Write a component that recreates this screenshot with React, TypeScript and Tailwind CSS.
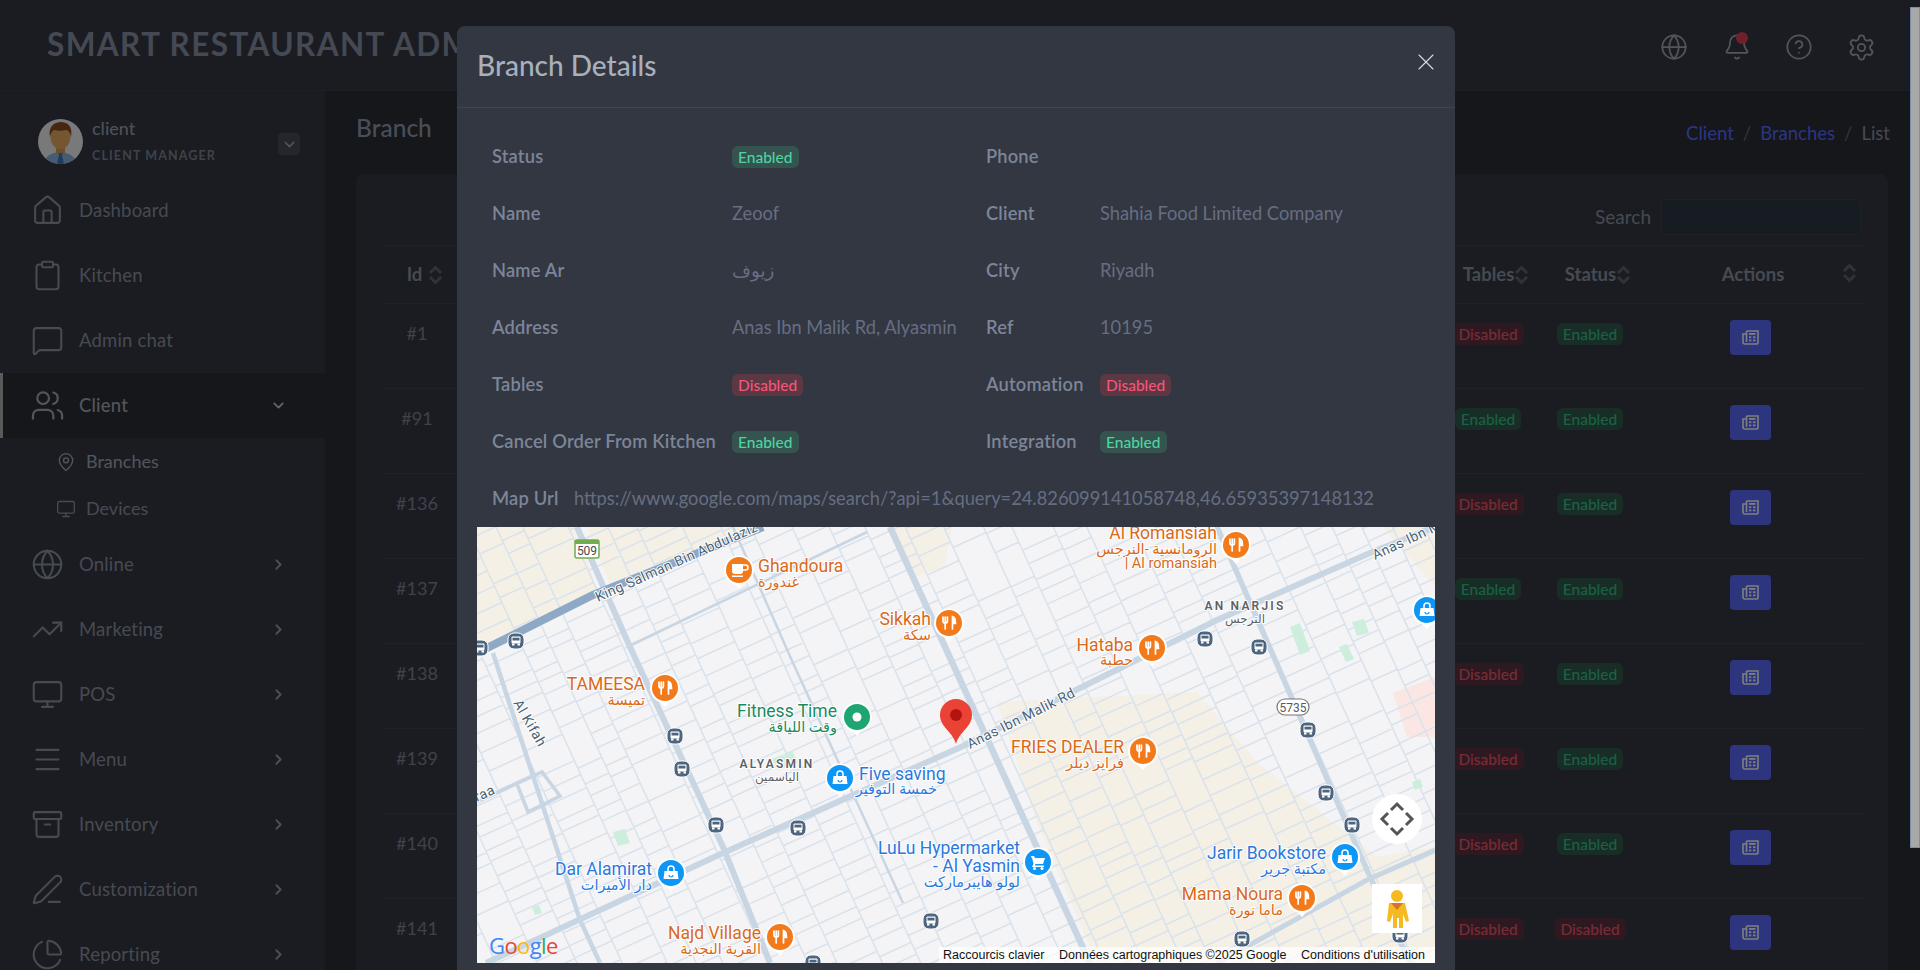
import {
  Archive,
  ChartPie,
  ChevronDown,
  ChevronRight,
  CircleHelp,
  Clipboard,
  Globe,
  House,
  MapPin,
  Menu,
  MessageSquare,
  Monitor,
  PenLine,
  Settings,
  Bell,
  TrendingUp,
  Users,
  X,
} from "lucide-react";
import type { ReactNode } from "react";

const mainMenu = [
  { label: "Dashboard", icon: House },
  { label: "Kitchen", icon: Clipboard },
  { label: "Admin chat", icon: MessageSquare },
];

const lowerMenu = [
  { label: "Online", icon: Globe },
  { label: "Marketing", icon: TrendingUp },
  { label: "POS", icon: Monitor },
  { label: "Menu", icon: Menu },
  { label: "Inventory", icon: Archive },
  { label: "Customization", icon: PenLine },
  { label: "Reporting", icon: ChartPie },
];

const rows = [
  { id: 1, tables: false, status: true },
  { id: 91, tables: true, status: true },
  { id: 136, tables: false, status: true },
  { id: 137, tables: true, status: true },
  { id: 138, tables: false, status: true },
  { id: 139, tables: false, status: true },
  { id: 140, tables: false, status: true },
  { id: 141, tables: false, status: false },
];

function SortIcon() {
  return (
    <svg width="15" height="18" viewBox="0 0 15 18" fill="none" stroke="#5d6472" strokeWidth="3">
      <path d="M2 7l5.500-5.500L13 7" />
      <path d="M2 11l5.500 5.500L13 11" />
    </svg>
  );
}

function PageBadge({ on }: { on: boolean }) {
  return (
    <span
      className={
        on
          ? "inline-block h-[22px] rounded-md bg-[#2f5a4c] px-[6px] text-[15.500px] leading-[22px] font-medium text-[#36c08a]"
          : "inline-block h-[22px] rounded-md bg-[#5c3340] px-[6px] text-[15.500px] leading-[22px] font-medium text-[#f0566f]"
      }
    >
      {on ? "Enabled" : "Disabled"}
    </span>
  );
}

function ModalBadge({ on }: { on: boolean }) {
  return (
    <span
      className={
        on
          ? "inline-block h-[22px] rounded-md bg-[#35544f] px-[6px] text-[15.500px] leading-[22px] font-medium text-[#4dd3a2]"
          : "inline-block h-[22px] rounded-md bg-[#5c3845] px-[6px] text-[15.500px] leading-[22px] font-medium text-[#f2567a]"
      }
    >
      {on ? "Enabled" : "Disabled"}
    </span>
  );
}

function Avatar() {
  return (
    <svg width="45" height="45" viewBox="0 0 45 45" className="rounded-full">
      <rect width="45" height="45" fill="#f2f2f2" />
      <path d="M6 45c1-8 6-11 16-12 10 1 15 4 17 12z" fill="#8fb8e0" />
      <path d="M20 33h5l-1 3 2 9h-7l2-9z" fill="#3f78c0" />
      <rect x="18" y="26" width="9" height="8" fill="#d9a05c" />
      <ellipse cx="22.500" cy="18" rx="10" ry="12" fill="#e9ad62" />
      <path d="M12 18c-2-10 4-15 11-15s12 5 10 15c-1-5-3-7-5-7-4 1-9 1-12 0-2 1-3 3-4 7z" fill="#8a4f28" />
    </svg>
  );
}

function NewsIcon() {
  return (
    <svg width="17" height="15" viewBox="0 0 17 15" fill="none" stroke="#fff" strokeWidth="1.600">
      <path d="M4.500 1h11.500v11.500a1.500 1.500 0 0 1-1.500 1.500H3a2 2 0 0 1-2-2V4h3.500" />
      <path d="M4.500 1v11" />
      <g fill="#fff" stroke="none">
        <rect x="7" y="3" width="6.500" height="1.800" />
        <rect x="7" y="6.300" width="2.300" height="1.800" />
        <rect x="11" y="6.300" width="2.500" height="1.800" />
        <rect x="7" y="9.500" width="2.300" height="1.800" />
        <rect x="11" y="9.500" width="2.500" height="1.800" />
      </g>
    </svg>
  );
}

function MenuRow({ icon, label, chevron }: { icon: ReactNode; label: string; chevron?: boolean }) {
  return (
    <div className="flex h-[65px] items-center pl-[32px] pr-[38px]">
      <span className="flex w-[30px] justify-center">{icon}</span>
      <span className="ml-[17px] flex-1 text-[18.500px] tracking-[0.01em] text-[#8d94a3]">{label}</span>
      {chevron && <ChevronRight size={17} strokeWidth={2.500} className="text-[#9aa0ac]" />}
    </div>
  );
}

function Sidebar() {
  return (
    <aside className="w-[325px] shrink-0 bg-[#343844]">
      <div className="flex h-[87px] items-start pl-[38px] pt-[28px]">
        <Avatar />
        <div className="ml-[9px] flex-1">
          <p className="-mt-[2px] text-[18px] leading-[22px] font-medium text-[#9aa1af]">client</p>
          <p className="mt-[8px] text-[12.500px] leading-[18px] font-bold tracking-[0.09em] text-[#7d8494]">CLIENT MANAGER</p>
        </div>
        <span className="mr-[25px] mt-[14px] flex h-[22px] w-[22px] items-center justify-center rounded bg-[#484c58]">
          <ChevronDown size={17} className="text-[#a5abb8]" />
        </span>
      </div>
      {mainMenu.map((m) => (
        <MenuRow key={m.label} label={m.label} icon={<m.icon size={33} strokeWidth={1.500} className="shrink-0 text-[#8d94a3]" />} />
      ))}
      <div className="flex h-[65px] items-center border-l-[3px] border-[#b5b5b5] bg-[#2a2e36] pl-[29px] pr-[38px]">
        <span className="flex w-[30px] justify-center">
          <Users size={35} strokeWidth={1.500} className="shrink-0 text-[#a5abb8]" />
        </span>
        <span className="ml-[17px] flex-1 text-[18.500px] tracking-[0.01em] font-medium text-[#a5abb8]">Client</span>
        <ChevronDown size={17} strokeWidth={2.500} className="text-[#c5c9d2]" />
      </div>
      <div className="flex h-[47px] items-center pl-[56px] text-[18px] text-[#a5abb8]">
        <MapPin size={20} strokeWidth={1.600} />
        <span className="ml-[10px]">Branches</span>
      </div>
      <div className="flex h-[47px] items-center pl-[56px] text-[18px] text-[#8d94a3]">
        <Monitor size={20} strokeWidth={1.600} />
        <span className="ml-[10px]">Devices</span>
      </div>
      {lowerMenu.map((m) => (
        <MenuRow key={m.label} chevron label={m.label} icon={<m.icon size={33} strokeWidth={1.500} className="shrink-0 text-[#8d94a3]" />} />
      ))}
    </aside>
  );
}

function BranchTable() {
  return (
    <div className="mr-[2px] rounded-lg bg-[#343844] pl-[26px] pr-[24px]">
      <div className="flex h-[71px] items-center justify-end pr-[3px] pt-[15px]">
        <span className="text-[19px] text-[#8d94a3]">Search</span>
        <span className="ml-[10px] h-[36px] w-[200px] rounded border border-[#3a4250] bg-[#2f3645]" />
      </div>
      <div className="grid h-[59px] grid-cols-[70px_986px_100px_104px_222px] items-center border-y border-[#3f434f] text-[18.500px] font-bold text-[#8d94a3]">
        <span className="flex items-center justify-center gap-[6px] pl-[16px]">
          Id <SortIcon />
        </span>
        <span />
        <span className="flex items-center justify-center pl-[16px]">
          Tables <SortIcon />
        </span>
        <span className="flex items-center justify-center pl-[16px]">
          Status <SortIcon />
        </span>
        <span className="relative text-center">
          Actions
          <span className="absolute right-[7px] top-[3px]">
            <SortIcon />
          </span>
        </span>
      </div>
      {rows.map((r) => (
        <div key={r.id} className="grid h-[85px] grid-cols-[70px_986px_100px_104px_222px] border-b border-[#3f434f] text-[18px] text-[#7d8494]">
          <span className="pt-[16px] text-center">#{r.id}</span>
          <span />
          <span className="pt-[16px] text-center">
            <PageBadge on={r.tables} />
          </span>
          <span className="pt-[16px] text-center">
            <PageBadge on={r.status} />
          </span>
          <span className="pt-[16px] pr-[5px] text-center">
            <button className="inline-flex h-[35px] w-[41px] items-center justify-center rounded bg-[#5a6aff]">
              <NewsIcon />
            </button>
          </span>
        </div>
      ))}
    </div>
  );
}

// minor street network, rotated with the main roads
function streetPath() {
  let seed = 7;
  const rand = () => {
    seed = (seed * 16807) % 2147483647;
    return seed / 2147483647;
  };
  const ca = Math.cos(0.43);
  const sa = Math.sin(0.43);
  const pt = (u: number, v: number) => `${(480 + u * ca + v * sa).toFixed(1)} ${(218 - u * sa + v * ca).toFixed(1)}`;
  let d = "";
  for (let u = -720; u < 720; ) {
    const w = 24 + rand() * 20;
    d += `M${pt(u, -560)}L${pt(u, 560)}`;
    for (let v = -560; v < 560; ) {
      const step = 11 + rand() * 11;
      if (rand() > 0.1) d += `M${pt(u, v)}L${pt(u + w, v)}`;
      v += step;
    }
    u += w;
  }
  return d;
}

const streets = streetPath();

type Tone = "orange" | "blue" | "green";

const toneFill: Record<Tone, string> = { orange: "#f27a1a", blue: "#0d96f6", green: "#1ea672" };
const toneText: Record<Tone, string> = { orange: "#d9691a", blue: "#2b78dd", green: "#1b8a5f" };

const pins: { x: number; y: number; tone: Tone; kind: "fork" | "cup" | "bag" | "cart" | "dot" }[] = [
  { x: 262, y: 43, tone: "orange", kind: "cup" },
  { x: 472, y: 96, tone: "orange", kind: "fork" },
  { x: 188, y: 161, tone: "orange", kind: "fork" },
  { x: 380, y: 190, tone: "green", kind: "dot" },
  { x: 363, y: 251, tone: "blue", kind: "bag" },
  { x: 194, y: 346, tone: "blue", kind: "bag" },
  { x: 303, y: 410, tone: "orange", kind: "fork" },
  { x: 561, y: 335, tone: "blue", kind: "cart" },
  { x: 759, y: 18, tone: "orange", kind: "fork" },
  { x: 675, y: 121, tone: "orange", kind: "fork" },
  { x: 666, y: 224, tone: "orange", kind: "fork" },
  { x: 868, y: 330, tone: "blue", kind: "bag" },
  { x: 825, y: 371, tone: "orange", kind: "fork" },
  { x: 950, y: 83, tone: "blue", kind: "bag" },
];

const labels: { x: number; y: number; t: string; tone: Tone; anchor?: "end"; small?: boolean }[] = [
  { x: 281, y: 45, t: "Ghandoura", tone: "orange" },
  { x: 281, y: 60, t: "غندورة", tone: "orange", small: true },
  { x: 454, y: 98, t: "Sikkah", tone: "orange", anchor: "end" },
  { x: 454, y: 113, t: "سكة", tone: "orange", anchor: "end", small: true },
  { x: 168, y: 163, t: "TAMEESA", tone: "orange", anchor: "end" },
  { x: 168, y: 178, t: "تميسة", tone: "orange", anchor: "end", small: true },
  { x: 360, y: 190, t: "Fitness Time", tone: "green", anchor: "end" },
  { x: 360, y: 205, t: "وقت اللياقة", tone: "green", anchor: "end", small: true },
  { x: 382, y: 253, t: "Five saving", tone: "blue" },
  { x: 460, y: 267, t: "خمسة التوفير", tone: "blue", anchor: "end", small: true },
  { x: 175, y: 348, t: "Dar Alamirat", tone: "blue", anchor: "end" },
  { x: 175, y: 363, t: "دار الأميرات", tone: "blue", anchor: "end", small: true },
  { x: 284, y: 412, t: "Najd Village", tone: "orange", anchor: "end" },
  { x: 284, y: 427, t: "القرية النجدية", tone: "orange", anchor: "end", small: true },
  { x: 543, y: 327, t: "LuLu Hypermarket", tone: "blue", anchor: "end" },
  { x: 543, y: 345, t: "- Al Yasmin", tone: "blue", anchor: "end" },
  { x: 543, y: 360, t: "لولو هايبرماركت", tone: "blue", anchor: "end", small: true },
  { x: 740, y: 12, t: "Al Romansiah", tone: "orange", anchor: "end" },
  { x: 740, y: 27, t: "الرومانسية -النرجس", tone: "orange", anchor: "end", small: true },
  { x: 740, y: 41, t: "| Al romansiah", tone: "orange", anchor: "end", small: true },
  { x: 656, y: 124, t: "Hataba", tone: "orange", anchor: "end" },
  { x: 656, y: 138, t: "حطبة", tone: "orange", anchor: "end", small: true },
  { x: 647, y: 226, t: "FRIES DEALER", tone: "orange", anchor: "end" },
  { x: 647, y: 241, t: "فرايز ديلر", tone: "orange", anchor: "end", small: true },
  { x: 849, y: 332, t: "Jarir Bookstore", tone: "blue", anchor: "end" },
  { x: 849, y: 347, t: "مكتبة جرير", tone: "blue", anchor: "end", small: true },
  { x: 806, y: 373, t: "Mama Noura", tone: "orange", anchor: "end" },
  { x: 806, y: 388, t: "ماما نورة", tone: "orange", anchor: "end", small: true },
];

const buses = [
  [3, 121], [39, 114], [198, 209], [205, 242], [239, 298], [321, 301], [454, 394], [336, 436],
  [728, 112], [782, 120], [831, 203], [849, 266], [875, 298], [765, 412], [923, 408],
];

function PinGlyph({ kind }: { kind: string }) {
  if (kind === "fork")
    return (
      <g fill="none" stroke="#fff" strokeWidth="1.700" strokeLinecap="round">
        <path d="M-6-6v4a2.200 2.200 0 0 0 4.400 0v-4M-3.800-6v12" />
        <path d="M3.500 6V-6.500c2.500.5 3 3.500 3 7h-3" fill="#fff" />
      </g>
    );
  if (kind === "cup")
    return (
      <g fill="#fff">
        <path d="M-7-6H4v7a3 3 0 0 1-3 3h-5a3 3 0 0 1-3-3z" />
        <path d="M4-5h2.500a2.500 2.500 0 0 1 0 5H4" fill="none" stroke="#fff" strokeWidth="1.500" />
        <rect x="-7" y="5.500" width="11" height="1.500" />
      </g>
    );
  if (kind === "bag")
    return (
      <g>
        <path d="M-6.500-2h13l1 8h-15z" fill="#fff" />
        <path d="M-3-2v-2a3 3 0 0 1 6 0v2" fill="none" stroke="#fff" strokeWidth="1.500" />
        <path d="M-2 2a2 2 0 0 0 4 0" fill="none" stroke="#0d96f6" strokeWidth="1.200" />
      </g>
    );
  if (kind === "cart")
    return (
      <g fill="#fff">
        <path d="M-7-6h3l1 2H7L5 2h-7.500l-.8 1.500H6V5H-6l1.500-3L-6-4.500h-1z" />
        <circle cx="-3.500" cy="6.500" r="1.500" />
        <circle cx="4" cy="6.500" r="1.500" />
      </g>
    );
  return <circle r="4.500" fill="#fff" />;
}

function MapView() {
  return (
    <svg width="958" height="436" viewBox="0 0 958 436" className="block font-['Roboto','DejaVu_Sans',sans-serif]">
      <rect width="958" height="436" fill="#f4f3f5" />
      <g fill="#f4f0e6">
        <path d="M0 0h100l22 70L0 126z" />
        <path d="M110 0h170L135 62z" />
        <path d="M520 175l200-10 60 70 120 95 58-10v116H620l-60-140z" />
        <path d="M906 0h52v60z" />
        <path d="M415 0h60l-8 40-30 10z" />
      </g>
      <path d="M916 166l42-16v60h-28z" fill="#fbe6e4" />
      <path d={streets} fill="none" stroke="#dae2eb" strokeWidth="1.500" />
      <g fill="#cdeedd">
        <path d="M875 95l12-3 5 14-12 3z" />
        <path d="M813 100l10-4 10 28-10 4z" />
        <path d="M862 120l8-3 7 15-8 3z" />
        <path d="M136 305l12-3 5 14-12 3z" />
        <path d="M295 232l20-8 6 12-20 7z" />
        <path d="M55 380l7-2 3 8-7 2z" />
        <path d="M935 255l8-3 3 8-8 3z" />
      </g>
      <g fill="none" stroke="#c8d5e3" strokeLinecap="butt">
        <path d="M100 0l53 120 93 200 47 116" strokeWidth="6" />
        <path d="M413 0l200 436" strokeWidth="6.500" />
        <path d="M9 436l237-110 247-110 100-50 147-73 153-67 65-26" strokeWidth="6" />
        <path d="M740 0l150 343 43 93" strokeWidth="5.500" />
        <path d="M16 126l87 267 20 43" strokeWidth="4.500" />
        <path d="M740 436l150-83 68-30" strokeWidth="5" />
        <path d="M0 275l65-30 18 24-32 16-11-28" strokeWidth="3.500" />
        <path d="M256 0l60 136 110 240" strokeWidth="2.500" />
        <path d="M150 120l240-115" strokeWidth="2.500" />
      </g>
      <path d="M0 126L116 68 286 0" fill="none" stroke="#8ea9c6" strokeWidth="8" />

      <g fill="#4b5f75" fontSize="14" letterSpacing=".4" stroke="#fff" strokeWidth="2" paintOrder="stroke">
        <text transform="translate(121 75) rotate(-24)">King Salman Bin Abdulaziz</text>
        <text transform="translate(493 222) rotate(-26.500)">Anas Ibn Malik Rd</text>
        <text transform="translate(898 33) rotate(-25)">Anas Ibn Malik</text>
        <text transform="translate(36 176) rotate(60)">Al Kifah</text>
        <text transform="translate(0 275) rotate(-25)">raa</text>
      </g>

      {buses.map(([x, y]) => (
        <g key={`${x}-${y}`} transform={`translate(${x} ${y})`}>
          <rect x="-8" y="-8" width="16" height="16" rx="6" fill="#4e6580" stroke="#fff" strokeWidth="1" />
          <rect x="-4.500" y="-4.500" width="9" height="7" rx="1" fill="#fff" />
          <rect x="-3.500" y="-3.300" width="7" height="2.800" fill="#4e6580" />
          <rect x="-4" y="2.500" width="2.500" height="2" fill="#fff" />
          <rect x="1.500" y="2.500" width="2.500" height="2" fill="#fff" />
        </g>
      ))}

      <g fontSize="12" textAnchor="middle">
        <rect x="98" y="13" width="24" height="18" rx="2" fill="#fff" stroke="#71ad4f" strokeWidth="1.500" />
        <rect x="98" y="13" width="24" height="4" fill="#71ad4f" />
        <text x="110" y="28" fill="#4a4a4a">509</text>
        <rect x="800" y="172" width="32" height="16" rx="8" fill="#fff" stroke="#777" strokeWidth="1.200" />
        <text x="816" y="185" fill="#5a5a5a">5735</text>
      </g>

      <g fontWeight="600" fill="#5c5f66" textAnchor="middle" stroke="#fff" strokeWidth="2" paintOrder="stroke">
        <text x="300" y="241" fontSize="12" letterSpacing="2.200">ALYASMIN</text>
        <text x="300" y="254" fontSize="12" fontWeight="400">الياسمين</text>
        <text x="768" y="83" fontSize="12" letterSpacing="2.200">AN NARJIS</text>
        <text x="768" y="96" fontSize="12" fontWeight="400">النرجس</text>
      </g>

      {labels.map((l) => (
        <text
          key={l.t}
          x={l.x}
          y={l.y}
          textAnchor={l.anchor ?? "start"}
          fontSize={l.small ? 14.500 : 17.500}
          fill={toneText[l.tone]}
          stroke="#fff"
          strokeWidth="2"
          paintOrder="stroke"
        >
          {l.t}
        </text>
      ))}

      {pins.map((p) => (
        <g key={`${p.x}-${p.y}`} transform={`translate(${p.x} ${p.y})`}>
          <path d="M-14.500 4a15 15 0 1 1 29 0q-2 8-11 11l-3.500 4-3.500-4q-9-3-11-11z" fill="#fff" />
          <circle r="13" fill={toneFill[p.tone]} />
          <PinGlyph kind={p.kind} />
        </g>
      ))}

      <path d="M479 217c-3-12-16-17-16-29a16 16 0 0 1 32 0c0 12-13 17-16 29z" fill="#ea4335" />
      <circle cx="479" cy="188" r="6" fill="#b3140f" />

      <g fontSize="22" fontWeight="500">
        <text x="12" y="427" fontFamily="'Open Sans',sans-serif" letterSpacing="-.6">
          <tspan fill="#4285f4">G</tspan>
          <tspan fill="#ea4335">o</tspan>
          <tspan fill="#fbbc05">o</tspan>
          <tspan fill="#4285f4">g</tspan>
          <tspan fill="#34a853">l</tspan>
          <tspan fill="#ea4335">e</tspan>
        </text>
      </g>

      <rect x="462" y="420" width="496" height="16" fill="#fff" fillOpacity=".7" />
      <g fontSize="12.500" fontFamily="'Liberation Sans',sans-serif" fill="#111">
        <text x="466" y="432">Raccourcis clavier</text>
        <text x="582" y="432">Données cartographiques ©2025 Google</text>
        <text x="824" y="432">Conditions d'utilisation</text>
      </g>

      <circle cx="920" cy="292" r="25" fill="#fff" />
      <g fill="none" stroke="#555" strokeWidth="3">
        <path d="M914 283l6-6 6 6" />
        <path d="M914 301l6 6 6-6" />
        <path d="M911 286l-6 6 6 6" />
        <path d="M929 286l6 6-6 6" />
      </g>

      <rect x="895" y="357" width="50" height="49" fill="#fff" />
      <g fill="#f5b921">
        <circle cx="920" cy="369" r="6" />
        <path d="M912 376h16l4 18-3 1-3-8v14h-4v-10h-2v10h-4v-14l-3 8-3-1z" />
      </g>
      <path d="M914 376h12l-6 7z" fill="#d9722b" />
    </svg>
  );
}

function DetailRow({ a, av, b, bv }: { a: string; av?: ReactNode; b: string; bv?: ReactNode }) {
  return (
    <div className="flex h-[57px] items-center">
      <span className="w-[240px] shrink-0 font-semibold tracking-[0.01em] text-[#7d8598]">{a}</span>
      <span className="w-[224px] shrink-0 overflow-hidden whitespace-nowrap text-[#666e82]">{av}</span>
      <span className="ml-[30px] w-[114px] shrink-0 font-semibold tracking-[0.01em] text-[#7d8598]">{b}</span>
      <span className="text-[#666e82]">{bv}</span>
    </div>
  );
}

function BranchModal() {
  return (
    <div className="absolute left-[457px] top-[26px] w-[998px] rounded-lg bg-[#323742] text-[18.300px]">
      <div className="flex h-[82px] items-center justify-between border-b border-[#3f4552] pl-[20px] pr-[15px]">
        <h2 className="mb-[3px] text-[28px] font-medium text-[#a9afbb]">Branch Details</h2>
        <X size={28} strokeWidth={1} className="mb-[10px] text-[#d5d8de]" />
      </div>
      <div className="px-[35px] pt-[20px]">
        <DetailRow a="Status" av={<ModalBadge on />} b="Phone" />
        <DetailRow a="Name" av="Zeoof" b="Client" bv="Shahia Food Limited Company" />
        <DetailRow a="Name Ar" av="زيوف" b="City" bv="Riyadh" />
        <DetailRow a="Address" av="Anas Ibn Malik Rd, Alyasmin" b="Ref" bv="10195" />
        <DetailRow a="Tables" av={<ModalBadge on={false} />} b="Automation" bv={<ModalBadge on={false} />} />
        <DetailRow a="Cancel Order From Kitchen" av={<ModalBadge on />} b="Integration" bv={<ModalBadge on />} />
        <div className="flex h-[57px] items-center">
          <span className="w-[82px] shrink-0 font-semibold tracking-[0.01em] text-[#7d8598]">Map Url</span>
          <span className="text-[#666e82]">https://www.google.com/maps/search/?api=1&amp;query=24.826099141058748,46.65935397148132</span>
        </div>
      </div>
      <div className="px-[20px] pb-[20px]">
        <MapView />
      </div>
    </div>
  );
}

export default function App() {
  return (
    <div className="relative h-[970px] w-[1920px] overflow-hidden bg-[#2a2e36] font-['Lato','DejaVu_Sans',sans-serif]">
      <header className="flex h-[91px] items-center justify-between border-b border-[#3a3e49] bg-[#343844] pl-[47px] pr-[44px]">
        <h1 className="whitespace-nowrap text-[31.500px] font-bold tracking-[1.400px] text-[#8a93a6]">SMART RESTAURANT ADMIN</h1>
        <div className="mt-[4px] flex items-center gap-[34px] text-[#a5abb8]">
          <Globe size={28} strokeWidth={1.500} className="mr-[1px]" />
          <span className="relative">
            <Bell size={28} strokeWidth={1.500} />
            <span className="absolute right-[3px] -top-[1px] h-[12px] w-[12px] rounded-full bg-[#e0405a]" />
          </span>
          <CircleHelp size={28} strokeWidth={1.500} />
          <Settings size={29} strokeWidth={1.500} />
        </div>
      </header>
      <div className="flex">
        <Sidebar />
        <main className="flex-1 pl-[31px] pr-[30px]">
          <div className="flex h-[83px] items-center justify-between pb-[8px]">
            <h2 className="text-[24.500px] font-medium text-[#939cb0]">Branch</h2>
            <nav className="mt-[10px] flex items-center text-[18.500px]">
              <span className="text-[#5a6aff]">Client</span>
              <span className="mx-[9px] text-[#666c7a]">/</span>
              <span className="text-[#5a6aff]">Branches</span>
              <span className="mx-[9px] text-[#666c7a]">/</span>
              <span className="text-[#8d94a3]">List</span>
            </nav>
          </div>
          <BranchTable />
        </main>
      </div>

      <div className="absolute inset-0 bg-black/50" />
      <BranchModal />
      <div className="absolute right-0 top-[7px] h-[841px] w-[10px] border border-[#7d8fa8] bg-[#a8a8a8]" />
    </div>
  );
}
